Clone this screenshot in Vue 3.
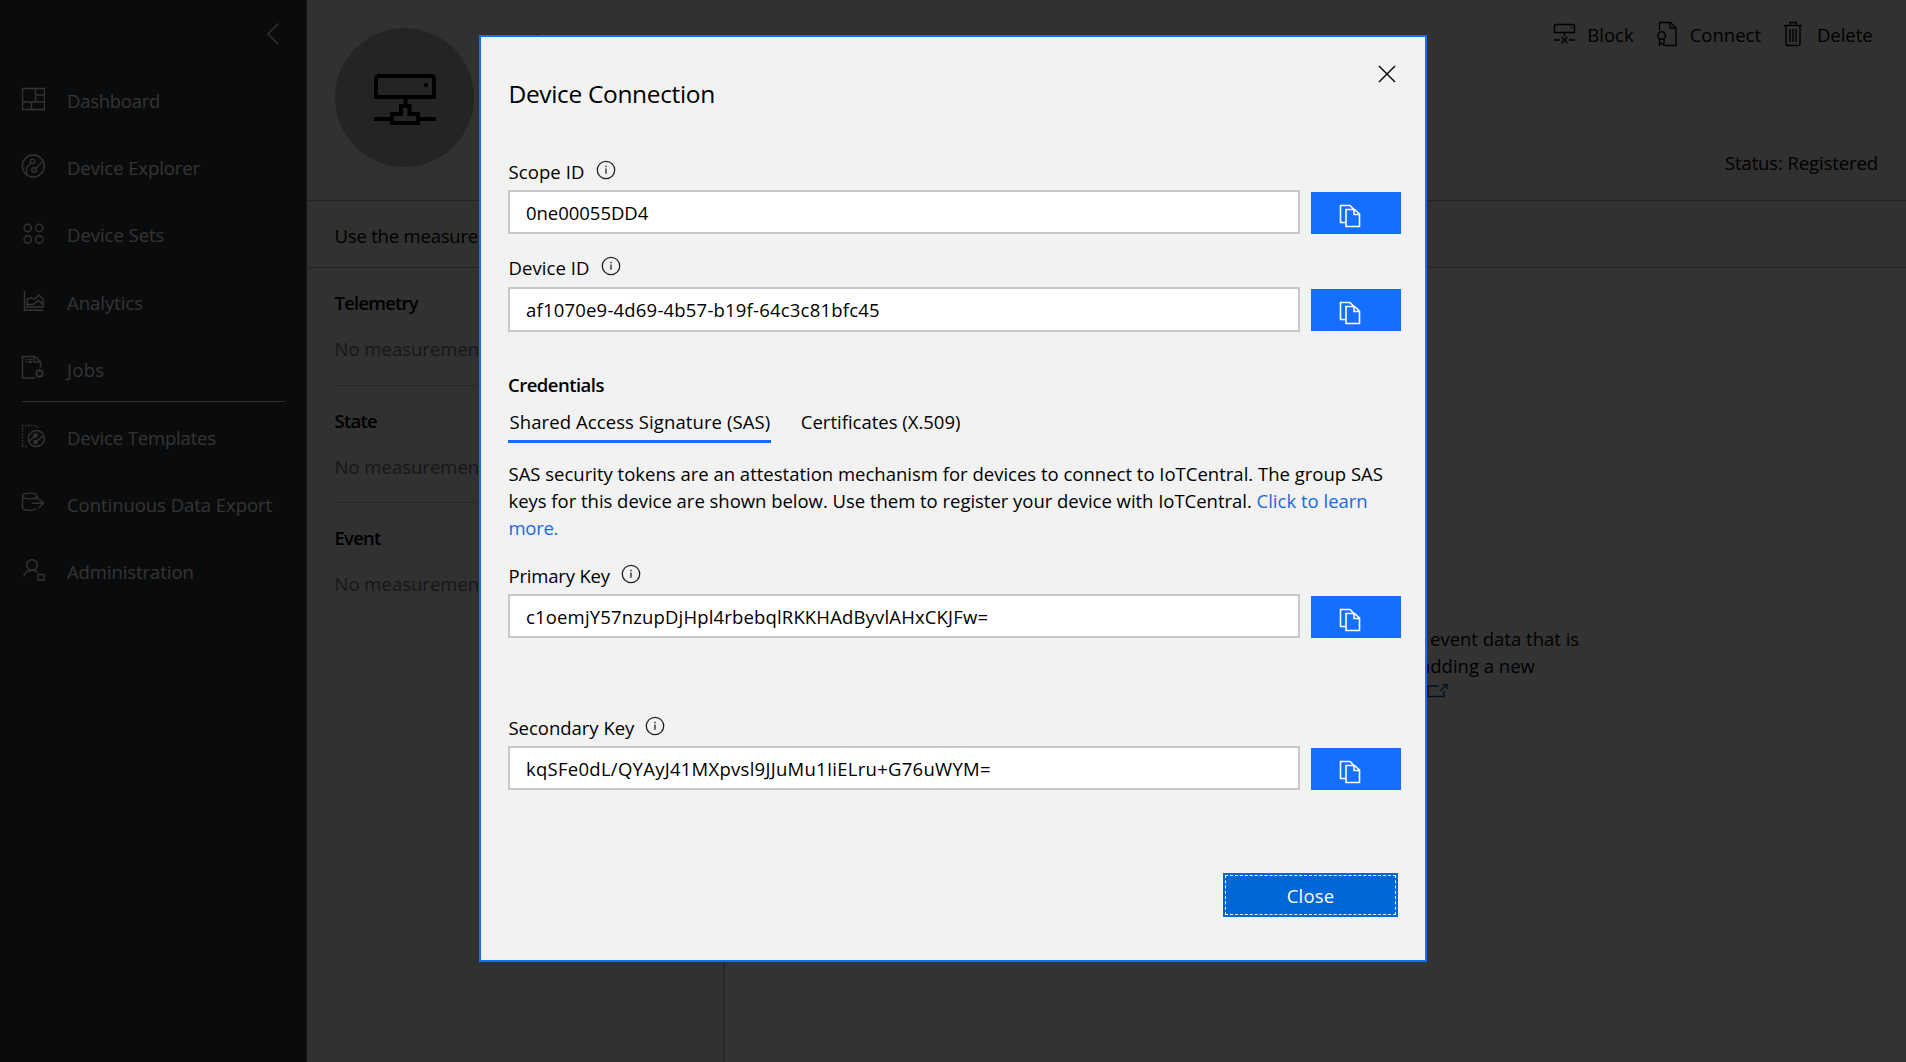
<script setup>
// "ls" is the letter spacing of a label, in pixels
const nav = [
  { id: 'dashboard', label: 'Dashboard', ls: -0.27 },
  { id: 'explorer', label: 'Device Explorer', ls: -0.09 },
  { id: 'sets', label: 'Device Sets', ls: -0.03 },
  { id: 'analytics', label: 'Analytics', ls: -0.02 },
  { id: 'jobs', label: 'Jobs', ls: 0.3 },
  { id: 'templates', label: 'Device Templates', ls: -0.16 },
  { id: 'export', label: 'Continuous Data Export', ls: -0.05 },
  { id: 'admin', label: 'Administration', ls: -0.08 },
]
const measures = ['Telemetry', 'State', 'Event']
const ids = [
  { key: 'scope', label: 'Scope ID', labelLs: 0.1, value: '0ne00055DD4', ls: -0.03 },
  { key: 'device', label: 'Device ID', labelLs: 0.07, value: 'af1070e9-4d69-4b57-b19f-64c3c81bfc45', ls: 0.2 },
]
const keys = [
  { key: 'primary', label: 'Primary Key', labelLs: -0.18, value: 'c1oemjY57nzupDjHpl4rbebqlRKKHAdByvlAHxCKJFw=', ls: 0.16 },
  { key: 'secondary', label: 'Secondary Key', labelLs: -0.02, value: 'kqSFe0dL/QYAyJ41MXpvsl9JJuMu1IiELru+G76uWYM=', ls: 0.27 },
]
const groups = [ids, keys]
</script>

<template>
  <div class="page">
    <nav class="sidebar">
      <div class="collapse">
        <svg width="14" height="24" viewBox="0 0 14 24"><path d="M12.500 1.500 2 12l10.500 10.500" /></svg>
      </div>
      <div v-for="n in nav" :key="n.id" class="nav-item" :class="n.id">
        <svg class="nav-icon" width="24" height="24" viewBox="0 0 24 24">
          <g v-if="n.id === 'dashboard'"><path d="M1.500 1.500h22v21h-22zM14.500 1.500v13.500M1.500 15h22M14.500 8h9M10.500 15v7.500" /></g>
          <g v-else-if="n.id === 'explorer'"><circle cx="12.300" cy="12" r="11" /><circle cx="11.500" cy="7.300" r="2.200" /><circle cx="13" cy="16" r="2.200" /><path d="M10 9 5.500 13.500v6.500M14.500 14.500l7-7" /></g>
          <g v-else-if="n.id === 'sets'"><circle cx="6.700" cy="6" r="3.700" /><circle cx="18.200" cy="6" r="3.700" /><circle cx="6.700" cy="17.500" r="3.700" /><circle cx="18.200" cy="17.500" r="3.700" /></g>
          <g v-else-if="n.id === 'analytics'"><path d="M3.500 1v19.300h19M6 17V9.500l4-2 3.500 2 4.500-4.500 4 4v8zM6 14.500h6l5.500-4 4.500 4" /></g>
          <g v-else-if="n.id === 'jobs'"><path d="M14 23H1.500V1.500h12.500l5.500 5.500v5.500M13 1.500v5.500h6.500M4 4.500h1.500M7 4.500h4.500M4 7h1.500M7 7h4.500" /><circle cx="18.500" cy="18.500" r="3" /><path d="M18.500 14v1.500M18.500 21.500v1.500M14 18.500h1.500M21.500 18.500h1.500M15.300 15.300l1 1M20.700 20.700l1 1M15.300 21.700l1-1M20.700 16.300l1-1" /></g>
          <g v-else-if="n.id === 'templates'"><path d="M6 22.500H1.500v-21h13.500l3 3" stroke-dasharray="1.800 1.300" /><circle cx="15.300" cy="14.500" r="8" /><circle class="dot" cx="14.500" cy="11.500" r="1.600" /><circle class="dot" cx="14.500" cy="18" r="1.600" /><path d="M14.500 11.500 8.500 17M14.500 18l7.500-6" /></g>
          <g v-else-if="n.id === 'export'"><ellipse cx="8.800" cy="5" rx="7.300" ry="2.900" /><path d="M1.500 5v11.500c0 1.700 3.300 2.900 7.300 2.900 3 0 5.400-.6 6.600-1.600M16.100 5v3.500M11 12.300h11.500M17.500 7.500l5 4.800-5 4.800" /></g>
          <g v-else><circle cx="11" cy="7" r="5.300" /><path d="M3 18.500c0-3.500 3.500-6.300 8-6.300 2.500 0 4.500.8 6 2.300M17 16.500h6v5.500h-6z" /></g>
        </svg>
        <span :style="{ letterSpacing: n.ls + 'px' }">{{ n.label }}</span>
      </div>
    </nav>

    <main class="main">
      <header class="head">
        <div class="avatar">
          <svg width="64" height="52" viewBox="0 0 64 52">
            <path d="M3 24V6q0-3 3-3h52q3 0 3 3v18zM32.500 24v8M1 46h18M45 46h18M28 41v-8h8.500v8h8.500v9H19v-9z" fill="none" stroke="#000" stroke-width="4" />
            <circle cx="53" cy="12" r="2.200" />
          </svg>
        </div>
        <i class="name-mark"></i>
        <div class="head-right">
          <div class="toolbar">
            <svg width="24" height="24" viewBox="0 0 24 24"><path d="M2.500 10.500V4q0-1.500 1.500-1.500h17q1.500 0 1.500 1.500v6.500zM12.500 10.500v4M2 18h6M17 18h6M9.500 15l6 6M15.500 15l-6 6M19 5.500h1.200" /></svg>
            <span class="t-block">Block</span>
            <svg width="22" height="26" viewBox="0 0 22 26"><path d="M3.500 9V1.500h11l5.500 5.500v17.500h-11M14 1.500V7h6" /><circle cx="5.700" cy="14.500" r="3.800" /><path d="M3.500 17.500v6.500l2.200-1.800L8 24v-6.500" /></svg>
            <span class="t-connect">Connect</span>
            <svg width="20" height="26" viewBox="0 0 20 26"><path d="M1 4.500h18M3 4.500V23q0 1.500 1.500 1.500h11q1.500 0 1.500-1.500V4.500M7 4V1.500h6V4M7 8v13M10 8v13M13 8v13" /></svg>
            <span class="t-delete">Delete</span>
          </div>
          <div class="status">Status: Registered</div>
        </div>
      </header>
      <div class="tabs-row">Use the measure</div>
      <div class="body">
        <section class="measures">
          <div v-for="m in measures" :key="m" class="measure">
            <h3>{{ m }}</h3>
            <p>No measurement</p>
          </div>
        </section>
        <section class="empty">
          <p>event data that is</p>
          <p class="adding">adding a new</p>
          <svg width="22" height="16" viewBox="0 0 22 16"><path d="M11.500 3H1v10.500h16V8M13 8l7-6.500M15.500 1.500H20V6" /></svg>
        </section>
      </div>
    </main>

    <div class="overlay">
      <div class="modal">
        <div class="modal-head">
          <h2>Device Connection</h2>
          <svg width="18" height="18" viewBox="0 0 18 18"><path d="M1 1l16 16M17 1 1 17" /></svg>
        </div>

        <template v-for="(group, g) in groups" :key="g">
          <div v-if="g === 1" class="credentials">
            <h4>Credentials</h4>
            <div class="pivot">
              <span class="sas">Shared Access Signature (SAS)</span>
              <span>Certificates (X.509)</span>
            </div>
            <p>SAS security tokens are an attestation mechanism for devices to connect to IoTCentral. The group SAS<br><span class="second">keys for this device are shown below. Use them to register your device with IoTCentral. </span><a>Click to learn</a><br><a class="more">more.</a></p>
          </div>
          <div v-for="f in group" :key="f.key" class="field" :class="f.key">
            <div class="label">
              <span :style="{ letterSpacing: f.labelLs + 'px' }">{{ f.label }}</span>
              <svg width="20" height="20" viewBox="0 0 20 20"><circle cx="10" cy="10" r="8.700" /><path d="M10 8.500v5.300M10 5.700v1.500" /></svg>
            </div>
            <div class="row">
              <div class="input" :style="{ letterSpacing: f.ls + 'px' }">{{ f.value }}</div>
              <div class="copy">
                <svg width="22" height="24" viewBox="0 0 22 24"><path d="M7 18.500H1.500v-17H11l3.500 3.500M7 5.500h8.500l5 4.500v12.500H7zM15 5.500v5h5.500" /></svg>
              </div>
            </div>
          </div>
        </template>

        <div class="close-row"><div class="close"><span>Close</span></div></div>
      </div>
    </div>
  </div>
</template>

<style>
body { overflow: hidden; }
</style>

<style scoped>
.page {
  position: relative;
  display: flex;
  height: 1062px;
  font: 18.5px/27px "Open Sans", "Noto Sans", sans-serif;
  color: #000;
  background: #fff;
}
h2, h3, h4, p { margin: 0; font-size: inherit; font-weight: 400; }
svg { display: block; flex: none; fill: none; stroke: currentColor; stroke-width: 1.4; }
span, .status { white-space: nowrap; }

.sidebar { width: 306px; flex: none; background: #32373c; color: #fff; border-right: 1px solid #60656a; }
.collapse { height: 66px; padding: 22px 0 0 266px; box-sizing: border-box; }
.nav-item { display: flex; height: 67.200px; box-sizing: border-box; padding-left: 21px; align-items: center; }
.nav-item span { margin: 2px 0 0 22px; }
.nav-icon { margin-top: -1px; }
.nav-item.sets .nav-icon, .nav-item.analytics .nav-icon { margin-top: 1px; }
.nav-item.jobs .nav-icon { margin-top: -2px; }
.nav-item.templates { margin-top: 1px; }
.nav-item.jobs { background: linear-gradient(#e8e8e8, #e8e8e8) 22px 66px / 263px 1px no-repeat; }
.dot { fill: currentColor; }

.main { flex: 1; display: flex; flex-direction: column; }
.head { display: flex; height: 200px; background: #f2f2f2; border-bottom: 1px solid #b4b4b4; }
.avatar { width: 139px; height: 139px; margin: 28px 0 0 28px; border-radius: 50%; background: #b4b4b4; display: flex; align-items: center; justify-content: center; }
.avatar svg { fill: #000; stroke: none; margin: 3px 0 0 1px; }
.name-mark { width: 1px; height: 4px; margin: 34px 0 0 63px; background: #000; }
.head-right { margin-left: auto; }
.toolbar { display: flex; align-items: center; height: 27px; margin: 21px 33.500px 0 0; justify-content: flex-end; }
.toolbar svg { margin-top: -1px; }
.toolbar span { margin-top: -1px; }
.toolbar .t-block { margin-left: 11px; margin-right: 22px; }
.toolbar .t-connect { margin-left: 12px; margin-right: 22px; }
.toolbar .t-delete { margin-left: 14px; letter-spacing: -.06px; }
.status { margin: 101px 28px 0 0; text-align: right; letter-spacing: -.11px; }
.tabs-row { height: 67px; box-sizing: border-box; padding: 21px 0 0 27.500px; background: #f2f2f2; border-bottom: 1px solid #b4b4b4; letter-spacing: -.2px; }
.body { flex: 1; display: flex; }
.measures { width: 418px; box-sizing: border-box; padding: 0 27.500px; background: #f2f2f2; border-right: 2px solid #c8c8c8; }
.measure { height: 117.500px; box-sizing: border-box; padding-top: 21px; border-bottom: 1px solid #c8c8c8; }
.measure:last-child { border: 0; }
.measure h3 { font-weight: 600; letter-spacing: -.78px; }
.measure p { margin-top: 19px; color: #767676; }
.empty { padding: 357px 0 0 705px; }
.empty .adding { margin-left: -10px; }
.empty svg { color: #1450a0; margin: 4px 0 0 -3px; }

.overlay { position: absolute; inset: 0; background: rgba(0, 0, 0, .8); }
.modal { width: 948px; height: 927px; box-sizing: border-box; margin: 35px 0 0 479px; border: 2px solid #146eff; background: #f2f2f2; padding: 0 24px 0 27px; display: flow-root; }
.modal-head { display: flex; justify-content: space-between; height: 121px; }
.modal-head h2 { font-size: 24.500px; line-height: 34px; letter-spacing: -.34px; margin: 40px 0 0 .5px; }
.modal-head svg { margin: 28px 5px 0 0; }

.label { display: flex; height: 27px; margin-bottom: 5px; padding-left: .5px; }
.label svg { margin: 2px 0 0 11px; color: #222; stroke-width: 1.300; }
.row { display: flex; justify-content: space-between; }
.input { width: 792px; height: 44px; box-sizing: border-box; border: 2px solid #c8c8c8; background: #fff; padding: 7px 16px; }
.copy { width: 90px; height: 42px; margin-top: 2px; background: #146eff; color: #fff; }
.copy svg { margin: 12px 0 0 28px; stroke-width: 1.600; }
.field.device { margin-top: 20px; }
.field.device .input { height: 45px; margin-top: 1px; }
.field.device .copy { margin-top: 3px; }
.field.primary { margin-top: 20px; }
.field.secondary { margin-top: 76px; }

.credentials { margin-top: 39px; }
.credentials h4 { font-weight: 600; letter-spacing: -.52px; }
.pivot { display: flex; margin-top: 10px; }
.pivot span { padding: 0 1px 5px 1.500px; margin-right: 28px; border-bottom: 3px solid transparent; }
.pivot .sas { letter-spacing: .09px; border-color: #146eff; }
.credentials p { margin-top: 17px; padding-left: .5px; line-height: 27.200px; white-space: nowrap; }
.credentials .second { letter-spacing: -.025px; white-space: pre; }
.credentials a { color: #1a6ae0; }
.credentials .more { letter-spacing: -.3px; }

.close-row { display: flex; justify-content: flex-end; margin: 83px 3px 0 0; }
.close { width: 175px; height: 44px; box-sizing: border-box; padding: 2px; background: #0067d8; color: #fff; }
.close span { display: block; height: 40px; box-sizing: border-box; border: 1px dashed #fff; line-height: 39px; text-align: center; letter-spacing: .17px; }
</style>
